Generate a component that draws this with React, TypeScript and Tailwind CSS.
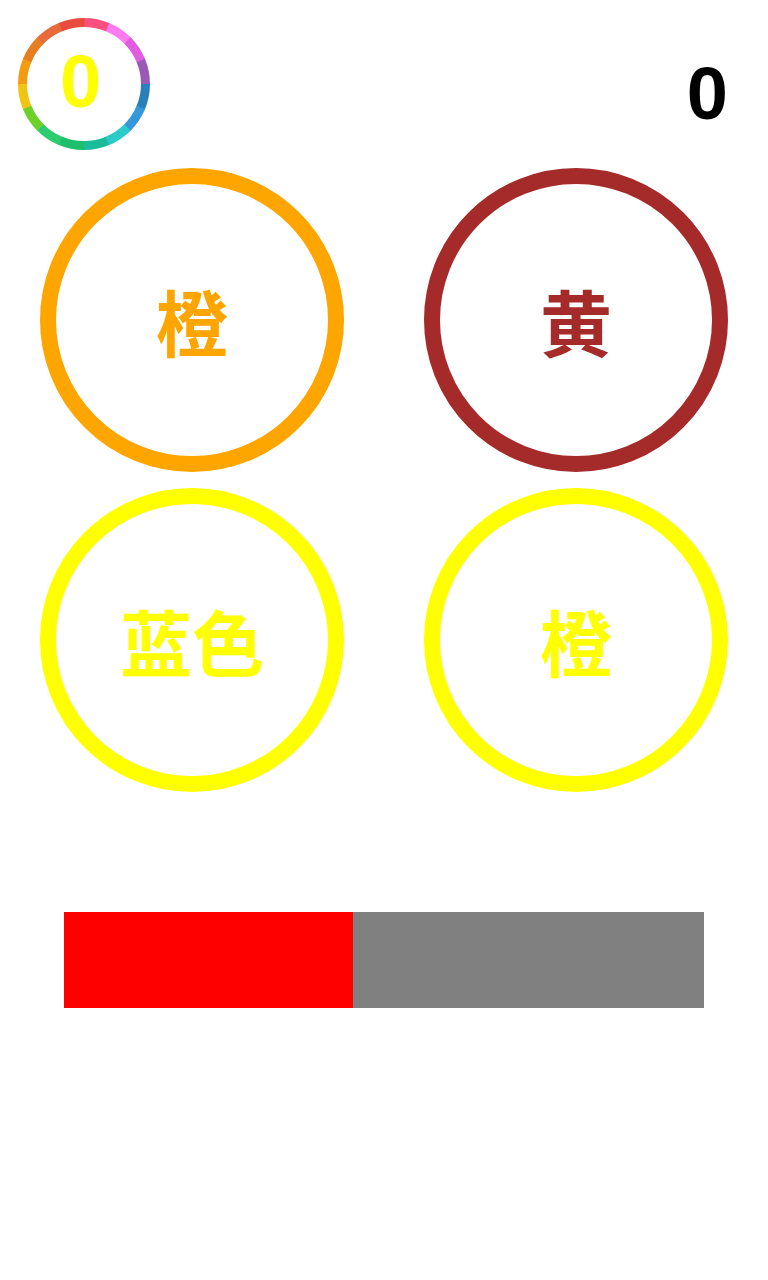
import React from "react";

const RING_COLORS = [
  "#fc4f7f",
  "#ff79f0",
  "#e05ce0",
  "#9b59b6",
  "#2980b9",
  "#3498db",
  "#2bcbcb",
  "#1abc9c",
  "#1dbf6a",
  "#2ecc71",
  "#6ed12a",
  "#f1c40f",
  "#f39c12",
  "#e67e22",
  "#e96b3b",
  "#e74c3c",
];

function TimerRing() {
  const cx = 66;
  const cy = 66;
  const r = 61.5;
  const n = RING_COLORS.length;
  const seg = (Math.PI * 2) / n;
  const pt = (a: number) => [cx + r * Math.sin(a), cy - r * Math.cos(a)];
  return (
    <svg width="132" height="132" viewBox="0 0 132 132" className="absolute inset-0">
      {RING_COLORS.map((c, i) => {
        const a0 = i * seg;
        const a1 = (i + 1) * seg + 0.01;
        const [x0, y0] = pt(a0);
        const [x1, y1] = pt(a1);
        return (
          <path
            key={i}
            d={`M ${x0} ${y0} A ${r} ${r} 0 0 1 ${x1} ${y1}`}
            stroke={c}
            strokeWidth="9"
            fill="none"
          />
        );
      })}
    </svg>
  );
}

const cells = [
  { text: "橙", color: "text-[#ffa500]", border: "border-[#ffa500]" },
  { text: "黄", color: "text-[#a52a2a]", border: "border-[#a52a2a]" },
  { text: "蓝色", color: "text-[#ffff00]", border: "border-[#ffff00]" },
  { text: "橙", color: "text-[#ffff00]", border: "border-[#ffff00]" },
];

export default function App() {
  return (
    <div className="w-[768px] h-[1280px] bg-white flex flex-col">
      <div className="flex justify-between items-start h-[168px]">
        <div className="relative ml-[18px] mt-[18px] w-[132px] h-[132px]">
          <TimerRing />
          <div className="absolute inset-0 flex items-center justify-center pr-[7px] pb-[5px]">
            <span className="font-['Liberation_Sans',Arial,sans-serif] font-bold text-[74px] leading-none text-[#ffff00]">
              0
            </span>
          </div>
        </div>
        <div className="mt-[57px] mr-[40px] font-['Liberation_Sans',Arial,sans-serif] font-bold text-[74px] leading-none text-black">
          0
        </div>
      </div>
      <div className="grid grid-cols-2 gap-y-4">
        {cells.map((c, i) => (
          <div key={i} className="flex justify-center">
            <div
              className={`w-[304px] h-[304px] rounded-full border-[16px] ${c.border} flex items-center justify-center`}
            >
              <span
                className={`font-['Noto_Sans_CJK_SC','Noto_Sans_CJK_JP',sans-serif] font-bold text-[72px] ${c.color}`}
              >
                {c.text}
              </span>
            </div>
          </div>
        ))}
      </div>
      <div className="mt-[120px] mx-16 h-24 flex bg-[#808080]">
        <div className="h-full w-[289px] bg-[#ff0000]" />
      </div>
    </div>
  );
}
